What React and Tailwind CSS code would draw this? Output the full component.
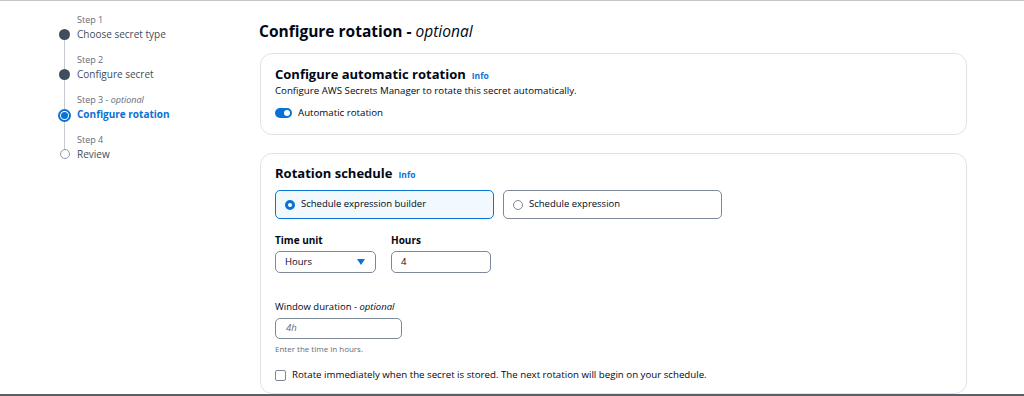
import React from 'react';

const steps = [
  { label: 'Step 1', title: 'Choose secret type', state: 'done' },
  { label: 'Step 2', title: 'Configure secret', state: 'done' },
  { label: 'Step 3', optional: true, title: 'Configure rotation', state: 'current' },
  { label: 'Step 4', title: 'Review', state: 'todo' },
];

function StepDot({ state }) {
  if (state === 'done') return <div className="w-[11px] h-[11px] rounded-full bg-[#414d5c] shrink-0" />;
  if (state === 'current')
    return (
      <div className="w-[13px] h-[13px] rounded-full border-[2px] border-[#0972d3] bg-white flex items-center justify-center shrink-0">
        <div className="w-[7px] h-[7px] rounded-full bg-[#0972d3]" />
      </div>
    );
  return <div className="w-[10px] h-[10px] rounded-full border border-[#8d99a8] bg-white shrink-0" />;
}

function Stepper() {
  return (
    <nav className="w-[259px] shrink-0 pl-[58px] pt-[12px]">
      {steps.map((s, i) => (
        <div key={i} className="flex h-[40px]">
          <div className="w-[13px] flex flex-col items-center">
            <div className={`w-px h-[16px] ${i === 0 ? '' : 'bg-[#c6cbd2]'}`} />
            <StepDot state={s.state} />
            <div className={`w-px flex-1 ${i === steps.length - 1 ? '' : 'bg-[#c6cbd2]'}`} />
          </div>
          <div className="pl-[6px]">
            <div className="text-[9px] leading-[14px] text-[#5f6b7a]">
              {s.label}
              {s.optional && (
                <>
                  {' - '}
                  <i>optional</i>
                </>
              )}
            </div>
            <div
              className={`text-[10px] leading-[15px] ${
                s.state === 'current' ? 'text-[#0972d3] font-bold' : 'text-[#414d5c]'
              }`}
            >
              {s.title}
            </div>
          </div>
        </div>
      ))}
    </nav>
  );
}

function Info() {
  return <span className="text-[8.5px] font-bold text-[#0972d3] ml-[6px]">Info</span>;
}

function Label({ children }) {
  return <div className="text-[10px] leading-[14px] font-bold text-[#000716] mb-[4px]">{children}</div>;
}

export default function App() {
  return (
    <div
      className="w-[1024px] h-[396px] overflow-hidden bg-white border-t border-[#c4c6cc] border-b-2 border-b-[#5c5f66] flex text-[#000716]"
      style={{ fontFamily: '"Open Sans", "Noto Sans", sans-serif' }}
    >
      <Stepper />

      <main className="w-[708px] pt-[18px]">
        <h1 className="text-[15.5px] leading-[24px] font-bold mb-[10px]">
          Configure rotation - <i className="font-medium">optional</i>
        </h1>

        <section className="ml-px border border-[#e0e2e5] rounded-[12px] pl-[14px] pt-[10px] h-[82px]">
          <div className="flex items-baseline">
            <h2 className="text-[13px] leading-[20px] font-bold">Configure automatic rotation</h2>
            <Info />
          </div>
          <p className="text-[9.7px] leading-[14px] text-[#000716]">
            Configure AWS Secrets Manager to rotate this secret automatically.
          </p>
          <div className="flex items-center gap-[6px] mt-[8px]">
            <div className="w-[17px] h-[10px] rounded-full bg-[#0972d3] flex items-center justify-end pr-[2px]">
              <div className="w-[6px] h-[6px] rounded-full bg-white" />
            </div>
            <span className="text-[9.7px] leading-[14px]">Automatic rotation</span>
          </div>
        </section>

        <section className="ml-px mt-[18px] border border-[#e0e2e5] rounded-[12px] pl-[14px] pt-[9px] h-[241px]">
          <div className="flex items-baseline">
            <h2 className="text-[13px] leading-[20px] font-bold">Rotation schedule</h2>
            <Info />
          </div>

          <div className="flex gap-[9px] mt-[7px]">
            <div className="w-[219px] h-[29px] rounded-[5px] border-[1.5px] border-[#0972d3] bg-[#f1f9fe] flex items-center pl-[9px] gap-[6px]">
              <div className="w-[10px] h-[10px] rounded-full border-[3px] border-[#0972d3] bg-white" />
              <span className="text-[9.5px]">Schedule expression builder</span>
            </div>
            <div className="w-[219px] h-[29px] rounded-[5px] border-[1.5px] border-[#7d8998] flex items-center pl-[9px] gap-[6px]">
              <div className="w-[10px] h-[10px] rounded-full border border-[#7d8998] bg-white" />
              <span className="text-[9.5px]">Schedule expression</span>
            </div>
          </div>

          <div className="flex gap-[15px] mt-[14px]">
            <div>
              <Label>Time unit</Label>
              <div className="w-[101px] h-[22px] rounded-[5px] border border-[#7d8998] flex items-center justify-between pl-[9px] pr-[10px]">
                <span className="text-[9.5px]">Hours</span>
                <svg width="8" height="6" viewBox="0 0 8 6">
                  <path d="M0 0 H8 L4 6 Z" fill="#0972d3" />
                </svg>
              </div>
            </div>
            <div>
              <Label>Hours</Label>
              <div className="w-[100px] h-[22px] rounded-[5px] border border-[#7d8998] flex items-center pl-[9px]">
                <span className="text-[9.5px]">4</span>
              </div>
            </div>
          </div>

          <div className="mt-[27px]">
            <div className="text-[9.5px] leading-[14px] mb-[4px]">
              Window duration - <i>optional</i>
            </div>
            <div className="w-[127px] h-[21px] rounded-[5px] border border-[#7d8998] flex items-center pl-[10px]">
              <span className="text-[9.5px] italic text-[#5f6b7a]">4h</span>
            </div>
            <div className="text-[8px] leading-[12px] text-[#5f6b7a] mt-[4px]">Enter the time in hours.</div>
          </div>

          <label className="flex items-center gap-[6px] mt-[13px]">
            <div className="w-[11px] h-[11px] rounded-[2px] border border-[#7d8998] bg-white" />
            <span className="text-[9.7px] leading-[14px]">
              Rotate immediately when the secret is stored. The next rotation will begin on your schedule.
            </span>
          </label>
        </section>
      </main>
    </div>
  );
}
